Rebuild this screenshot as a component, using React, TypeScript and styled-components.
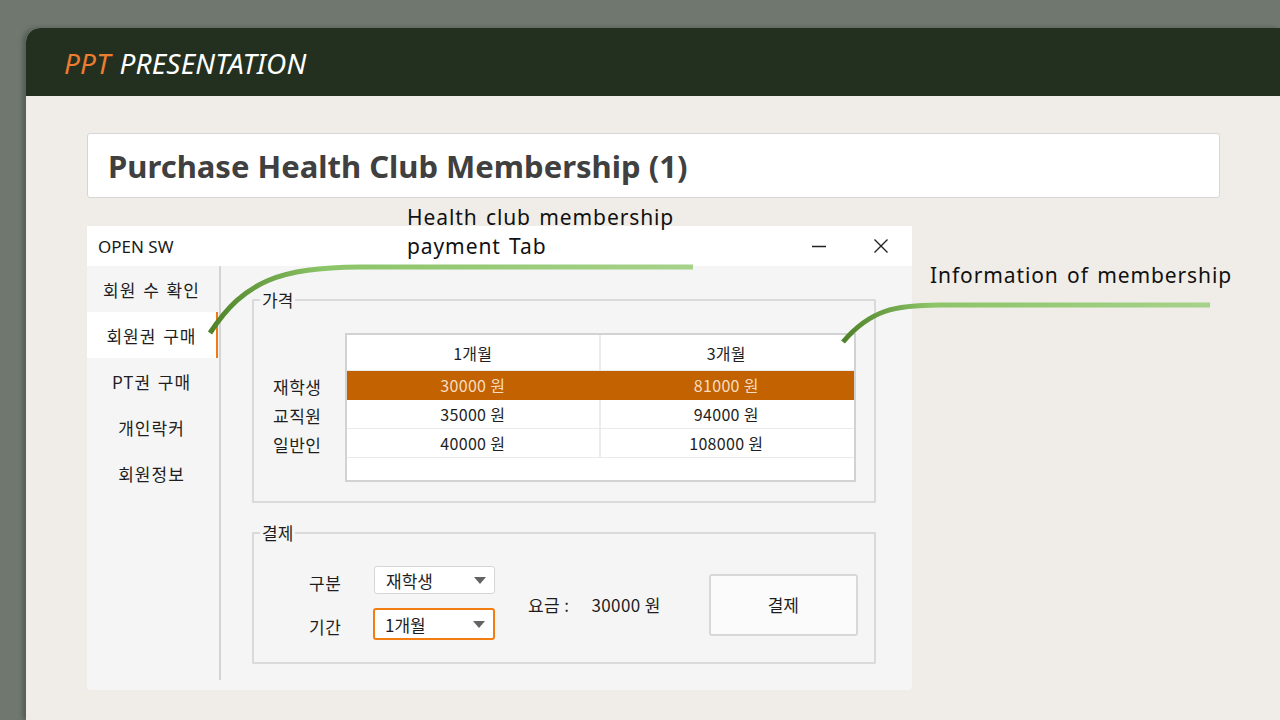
import React from 'react';
import styled, { createGlobalStyle } from 'styled-components';

const GlobalStyle = createGlobalStyle`
  html, body {
    margin: 0;
    padding: 0;
    background: #6f776f;
  }
  body {
    font-family: "Noto Sans", "Noto Sans CJK KR", sans-serif;
    overflow: hidden;
  }
`;

const KR = `"Noto Sans CJK KR", "Noto Sans", sans-serif`;

const Stage = styled.div`
  position: relative;
  width: 1280px;
  height: 720px;
  padding: 28px 0 0 26px;
  box-sizing: border-box;
`;

const Slide = styled.div`
  height: 692px;
  background: #f0ede8;
  border-top-left-radius: 14px;
  overflow: hidden;
  box-shadow: -3px 0 5px rgba(0, 0, 0, 0.25);
  display: flex;
  flex-direction: column;
`;

const Header = styled.header`
  height: 68px;
  background: #233020;
  display: flex;
  align-items: center;
  padding: 2px 0 0 38px;
  box-sizing: border-box;
  font-family: "Noto Sans", sans-serif;
  font-style: italic;
  font-size: 28px;
  font-weight: 400;
  letter-spacing: 0.2px;
  color: #ffffff;
`;

const Accent = styled.span`
  color: #ec7c30;
  margin-right: 9px;
`;

const Content = styled.main`
  padding: 37px 60px 0 61px;
  display: flex;
  flex-direction: column;
  gap: 28px;
`;

const TitleBox = styled.div`
  height: 65px;
  box-sizing: border-box;
  background: #ffffff;
  border: 1px solid #d6d6d6;
  border-radius: 3px;
  display: flex;
  align-items: center;
  padding-left: 20px;
`;

const Title = styled.h1`
  margin: 0;
  font-family: "Noto Sans", sans-serif;
  font-size: 31px;
  font-weight: 700;
  color: #404040;
  letter-spacing: 0;
`;

const Window = styled.div`
  width: 825px;
  height: 464px;
  background: #f5f5f5;
  display: flex;
  flex-direction: column;
  border-radius: 0 0 4px 4px;
  font-family: ${KR};
  color: #1e1e1e;
`;

const TitleBar = styled.div`
  height: 40px;
  background: #ffffff;
  display: flex;
  align-items: center;
  padding-left: 11px;
  font-family: "Noto Sans", sans-serif;
  font-size: 17px;
  color: #1a1a1a;
`;

const TitleText = styled.span`
  flex: 1;
`;

const WinButton = styled.span`
  width: 62px;
  height: 40px;
  display: flex;
  align-items: center;
  justify-content: center;
`;

const Body = styled.div`
  flex: 1;
  display: flex;
`;

const Sidebar = styled.nav`
  width: 132px;
  display: flex;
  flex-direction: column;
  margin-bottom: 10px;
  border-right: 2px solid #d4d4d4;
`;

const NavItem = styled.div<{ $active?: boolean }>`
  height: 46px;
  display: flex;
  align-items: center;
  justify-content: center;
  font-size: 17px;
  letter-spacing: 1px;
  word-spacing: 2px;
  background: ${({ $active }) => ($active ? '#ffffff' : 'transparent')};
  border-right: 2px solid ${({ $active }) => ($active ? '#f07a14' : 'transparent')};
  margin-right: 1px;
`;

const Main = styled.div`
  flex: 1;
  padding: 26px 36px 0 31px;
  display: flex;
  flex-direction: column;
  gap: 22px;
`;

const Group = styled.fieldset<{ $h: number }>`
  margin: 0;
  height: ${({ $h }) => $h}px;
  box-sizing: border-box;
  border: 2px solid #dadada;
  border-radius: 1px;
  padding: 0;
  min-width: 0;
`;

const Legend = styled.legend`
  font-size: 17px;
  padding: 0 2px;
  margin-left: 6px;
  line-height: 16px;
  color: #1e1e1e;
`;

const PriceLayout = styled.div`
  display: grid;
  grid-template-columns: 91px 511px;
  padding-top: 25px;
`;

const RowLabels = styled.div`
  display: flex;
  flex-direction: column;
  padding-top: 37px;
  padding-left: 19px;
`;

const RowLabel = styled.div`
  height: 29px;
  display: flex;
  align-items: center;
  font-size: 17px;
  letter-spacing: 0.5px;
  padding-top: 3px;
  box-sizing: border-box;
`;

const Table = styled.div`
  height: 149px;
  box-sizing: border-box;
  background: #ffffff;
  border: 2px solid #d2d2d2;
  display: flex;
  flex-direction: column;
`;

const Row = styled.div<{ $head?: boolean; $sel?: boolean }>`
  display: grid;
  grid-template-columns: 1fr 1fr;
  height: ${({ $head }) => ($head ? 36 : 29)}px;
  background: ${({ $sel }) => ($sel ? '#c26200' : '#ffffff')};
  color: ${({ $sel }) => ($sel ? '#f7dcc0' : '#1e1e1e')};
  border-bottom: 1px solid ${({ $sel }) => ($sel ? '#c26200' : '#eaeaea')};
  box-sizing: border-box;
`;

const Cell = styled.div<{ $divider?: string }>`
  display: flex;
  align-items: center;
  justify-content: center;
  font-size: 16px;
  letter-spacing: 0.3px;
  border-right: 2px solid ${({ $divider }) => $divider ?? 'transparent'};
`;

const PayLayout = styled.div`
  display: flex;
  align-items: center;
  padding: 24px 0 0 55px;
`;

const FieldGrid = styled.div`
  display: grid;
  grid-template-columns: 65px 121px;
  row-gap: 13px;
  align-items: center;
`;

const FieldLabel = styled.div`
  font-size: 17px;
  letter-spacing: 0.5px;
  padding-top: 5px;
`;

const Combo = styled.div<{ $focus?: boolean }>`
  height: ${({ $focus }) => ($focus ? 32 : 28)}px;
  box-sizing: border-box;
  background: #ffffff;
  border: ${({ $focus }) => ($focus ? '2px solid #f27d12' : '1.5px solid #d6d6d6')};
  border-radius: 3px;
  display: flex;
  align-items: center;
  justify-content: space-between;
  padding: 0 8px 0 ${({ $focus }) => ($focus ? 10 : 11)}px;
  font-size: 17px;
  margin-left: ${({ $focus }) => ($focus ? -1 : 0)}px;
`;

const Caret = styled.span`
  width: 0;
  height: 0;
  border-left: 6px solid transparent;
  border-right: 6px solid transparent;
  border-top: 7px solid #636363;
`;

const Fee = styled.div`
  display: flex;
  gap: 22px;
  margin-left: 33px;
  font-size: 17px;
  letter-spacing: 0.4px;
  margin-top: 4px;
`;

const PayButton = styled.button`
  margin-left: 48px;
  width: 149px;
  height: 62px;
  background: #fbfbfb;
  border: 2px solid #d8d8d8;
  border-radius: 3px;
  font-family: ${KR};
  font-size: 17px;
  color: #1e1e1e;
  margin-top: 4px;
`;

const Note = styled.div<{ $x: number; $y: number }>`
  position: absolute;
  left: ${({ $x }) => $x}px;
  top: ${({ $y }) => $y}px;
  font-family: "Noto Sans", sans-serif;
  font-size: 21px;
  line-height: 29px;
  color: #111111;
  letter-spacing: 0.9px;
  word-spacing: 2px;
`;

const Overlay = styled.svg`
  position: absolute;
  left: 0;
  top: 0;
  pointer-events: none;
`;

const prices = [
  ['30000 원', '81000 원'],
  ['35000 원', '94000 원'],
  ['40000 원', '108000 원'],
];

export default function App() {
  return (
    <>
      <GlobalStyle />
      <Stage>
        <Slide>
          <Header>
            <Accent>PPT</Accent>PRESENTATION
          </Header>
          <Content>
            <TitleBox>
              <Title>Purchase Health Club Membership (1)</Title>
            </TitleBox>
            <Window>
              <TitleBar>
                <TitleText>OPEN SW</TitleText>
                <WinButton>
                  <svg width="16" height="16" viewBox="0 0 16 16">
                    <path d="M1 8.5h14" stroke="#222" strokeWidth="1.4" />
                  </svg>
                </WinButton>
                <WinButton>
                  <svg width="16" height="16" viewBox="0 0 16 16">
                    <path d="M1.5 1.5l13 13M14.5 1.5l-13 13" stroke="#222" strokeWidth="1.4" />
                  </svg>
                </WinButton>
              </TitleBar>
              <Body>
                <Sidebar>
                  <NavItem>회원 수 확인</NavItem>
                  <NavItem $active>회원권 구매</NavItem>
                  <NavItem>PT권 구매</NavItem>
                  <NavItem>개인락커</NavItem>
                  <NavItem>회원정보</NavItem>
                </Sidebar>
                <Main>
                  <Group $h={211}>
                    <Legend>가격</Legend>
                    <PriceLayout>
                      <RowLabels>
                        <RowLabel>재학생</RowLabel>
                        <RowLabel>교직원</RowLabel>
                        <RowLabel>일반인</RowLabel>
                      </RowLabels>
                      <Table>
                        <Row $head>
                          <Cell $divider="#ececec">1개월</Cell>
                          <Cell>3개월</Cell>
                        </Row>
                        {prices.map((p, i) => (
                          <Row key={i} $sel={i === 0}>
                            <Cell $divider={i === 0 ? '#c26200' : '#ececec'}>{p[0]}</Cell>
                            <Cell>{p[1]}</Cell>
                          </Row>
                        ))}
                      </Table>
                    </PriceLayout>
                  </Group>
                  <Group $h={139}>
                    <Legend>결제</Legend>
                    <PayLayout>
                      <FieldGrid>
                        <FieldLabel>구분</FieldLabel>
                        <Combo>
                          재학생
                          <Caret />
                        </Combo>
                        <FieldLabel>기간</FieldLabel>
                        <Combo $focus>
                          1개월
                          <Caret />
                        </Combo>
                      </FieldGrid>
                      <Fee>
                        <span>요금 :</span>
                        <span>30000 원</span>
                      </Fee>
                      <PayButton type="button">결제</PayButton>
                    </PayLayout>
                  </Group>
                </Main>
              </Body>
            </Window>
          </Content>
        </Slide>

        <Note $x={407} $y={203}>
          Health club membership
          <br />
          payment Tab
        </Note>
        <Note $x={930} $y={261}>
          Information of membership
        </Note>

        <Overlay width="1280" height="720" viewBox="0 0 1280 720">
          <defs>
            <linearGradient id="g1" x1="210" y1="333" x2="693" y2="267" gradientUnits="userSpaceOnUse">
              <stop offset="0" stopColor="#4f8228" />
              <stop offset="0.25" stopColor="#8cc468" />
              <stop offset="1" stopColor="#a6d28a" />
            </linearGradient>
            <linearGradient id="g2" x1="843" y1="342" x2="1210" y2="305" gradientUnits="userSpaceOnUse">
              <stop offset="0" stopColor="#4f8228" />
              <stop offset="0.25" stopColor="#8cc468" />
              <stop offset="1" stopColor="#a6d28a" />
            </linearGradient>
          </defs>
          <path
            d="M210 333 C 245 280, 280 268, 360 267 L 693 267"
            fill="none"
            stroke="url(#g1)"
            strokeWidth="5"
          />
          <path
            d="M843 342 C 870 310, 895 305, 940 305 L 1210 305"
            fill="none"
            stroke="url(#g2)"
            strokeWidth="5"
          />
        </Overlay>
      </Stage>
    </>
  );
}
